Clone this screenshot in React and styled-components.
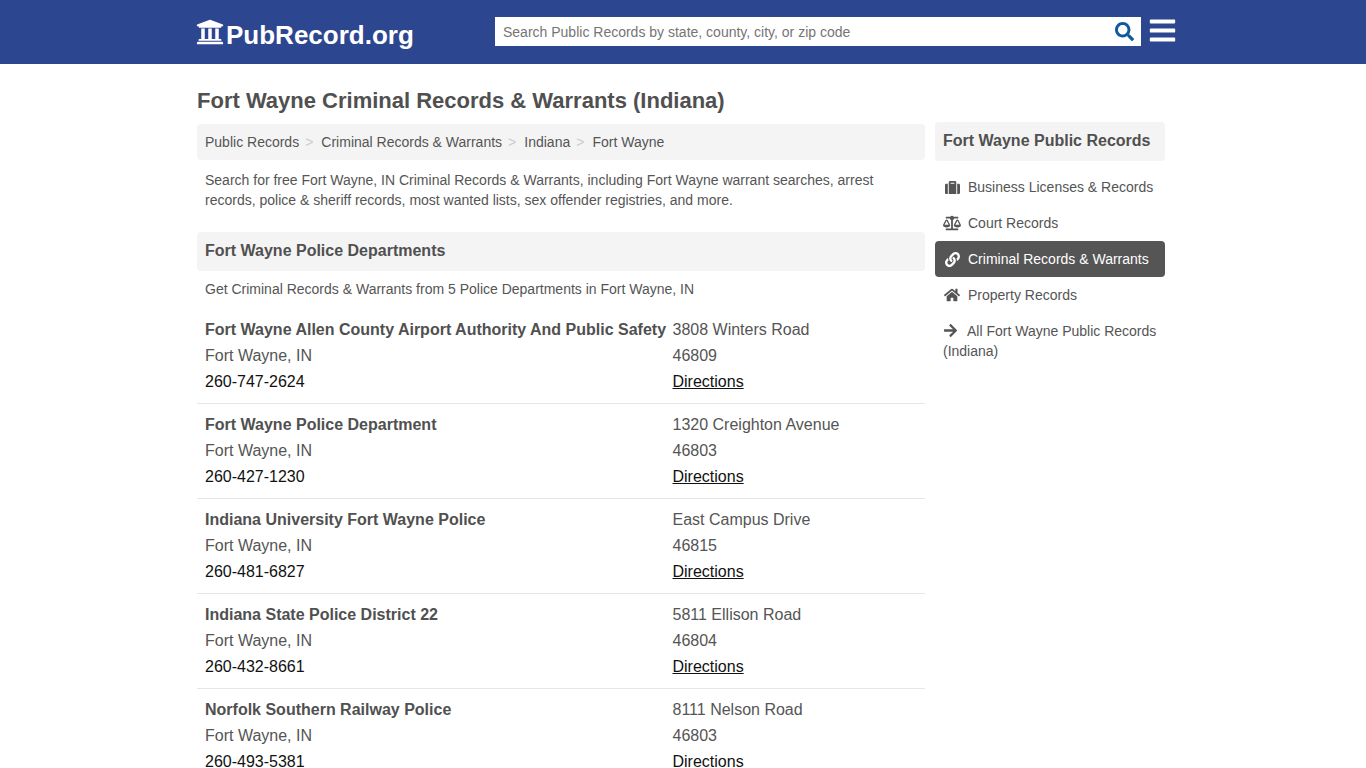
import React from "react";
import styled, { createGlobalStyle } from "styled-components";
import {
  FaUniversity,
  FaSearch,
  FaBars,
  FaSuitcase,
  FaBalanceScale,
  FaLink,
  FaHome,
  FaArrowRight,
} from "react-icons/fa";

const departments = [
  { name: "Fort Wayne Allen County Airport Authority And Public Safety", phone: "260-747-2624", street: "3808 Winters Road", zip: "46809" },
  { name: "Fort Wayne Police Department", phone: "260-427-1230", street: "1320 Creighton Avenue", zip: "46803" },
  { name: "Indiana University Fort Wayne Police", phone: "260-481-6827", street: "East Campus Drive", zip: "46815" },
  { name: "Indiana State Police District 22", phone: "260-432-8661", street: "5811 Ellison Road", zip: "46804" },
  { name: "Norfolk Southern Railway Police", phone: "260-493-5381", street: "8111 Nelson Road", zip: "46803" },
];

const crumbs = ["Public Records", "Criminal Records & Warrants", "Indiana", "Fort Wayne"];

const links = [
  { label: "Business Licenses & Records", Icon: FaSuitcase, size: 15 },
  { label: "Court Records", Icon: FaBalanceScale, size: 18 },
  { label: "Criminal Records & Warrants", Icon: FaLink, size: 15, active: true },
  { label: "Property Records", Icon: FaHome, size: 16 },
];

const App = () => {
  return (
    <>
      <GlobalStyle />
      <Header>
        <HeaderInner>
          <Logo href="#">
            <FaUniversity size={28} />
            <span>PubRecord.org</span>
          </Logo>
          <SearchBox>
            <SearchInput placeholder="Search Public Records by state, county, city, or zip code" />
            <SearchButton aria-label="Search">
              <FaSearch size={19} />
            </SearchButton>
          </SearchBox>
          <MenuButton aria-label="Menu">
            <FaBars size={29} />
          </MenuButton>
        </HeaderInner>
      </Header>
      <Page>
        <Title>Fort Wayne Criminal Records &amp; Warrants (Indiana)</Title>
        <Columns>
          <Main>
            <Breadcrumb>
              {crumbs.map((crumb, i) => (
                <Crumb key={crumb} $first={i === 0}>
                  {crumb}
                </Crumb>
              ))}
            </Breadcrumb>
            <Intro>
              Search for free Fort Wayne, IN Criminal Records &amp; Warrants, including Fort Wayne warrant searches, arrest
              records, police &amp; sheriff records, most wanted lists, sex offender registries, and more.
            </Intro>
            <SectionHead>Fort Wayne Police Departments</SectionHead>
            <SectionText>Get Criminal Records &amp; Warrants from 5 Police Departments in Fort Wayne, IN</SectionText>
            {departments.map((dep) => (
              <Row key={dep.name}>
                <div>
                  <Name>{dep.name}</Name>
                  <Line>Fort Wayne, IN</Line>
                  <Phone>{dep.phone}</Phone>
                </div>
                <div>
                  <Line>{dep.street}</Line>
                  <Line>{dep.zip}</Line>
                  <Directions href="#">Directions</Directions>
                </div>
              </Row>
            ))}
          </Main>
          <Sidebar>
            <SideHead>Fort Wayne Public Records</SideHead>
            <SideNav>
              {links.map(({ label, Icon, size, active }) => (
                <SideLink key={label} href="#" $active={active}>
                  <SideIcon>
                    <Icon size={size} />
                  </SideIcon>
                  {label}
                </SideLink>
              ))}
              <AllLink href="#">
                <FaArrowRight size={15} />
                All Fort Wayne Public Records (Indiana)
              </AllLink>
            </SideNav>
          </Sidebar>
        </Columns>
      </Page>
    </>
  );
};

export default App;

const GlobalStyle = createGlobalStyle`
  html, body {
    margin: 0;
    height: 768px;
    overflow: hidden;
    background: #fff;
    font-family: "Liberation Sans", Arial, sans-serif;
    color: #555;
  }
  * { box-sizing: border-box; }
`;

const Header = styled.header`
  height: 64px;
  background: #2d4690;
`;

const HeaderInner = styled.div`
  width: 972px;
  margin: 0 auto;
  height: 64px;
  display: flex;
  align-items: flex-start;
`;

const Logo = styled.a`
  display: flex;
  flex-shrink: 0;
  align-items: center;
  gap: 2px;
  width: 299px;
  margin-left: -1px;
  height: 64px;
  padding-top: 6px;
  color: #fff;
  text-decoration: none;
  font-size: 26px;
  font-weight: 700;
  white-space: nowrap;
  svg {
    flex-shrink: 0;
    margin-top: -6px;
  }
`;

const SearchBox = styled.div`
  display: flex;
  flex-shrink: 0;
  align-items: center;
  width: 646px;
  height: 29px;
  margin-top: 17px;
  background: #fff;
`;

const SearchInput = styled.input`
  flex: 1;
  min-width: 0;
  height: 100%;
  padding: 0 8px;
  border: 0;
  outline: 0;
  background: transparent;
  font: 14px "Liberation Sans", Arial, sans-serif;
  &::placeholder {
    color: #757575;
    opacity: 1;
  }
`;

const SearchButton = styled.button`
  display: flex;
  width: 36px;
  padding: 0 0 0 10px;
  border: 0;
  background: transparent;
  color: #0f5a9c;
`;

const MenuButton = styled.button`
  display: flex;
  flex-shrink: 0;
  margin: 16px 0 0 7px;
  padding: 0;
  border: 0;
  background: transparent;
  color: #fff;
`;

const Page = styled.main`
  width: 972px;
  margin: 0 auto;
`;

const Title = styled.h1`
  margin: 0;
  padding-top: 24px;
  height: 60px;
  font-size: 22px;
  line-height: 26px;
  font-weight: 700;
  color: #505050;
`;

const Columns = styled.div`
  display: flex;
  gap: 10px;
  align-items: flex-start;
`;

const Main = styled.div`
  width: 728px;
`;

const Breadcrumb = styled.nav`
  display: flex;
  align-items: center;
  height: 36px;
  padding: 0 8px;
  background: #f4f4f4;
  border-radius: 4px;
  font-size: 14px;
  color: #555;
`;

const Crumb = styled.span`
  &::before {
    content: ${(p) => (p.$first ? "none" : '">"')};
    color: #ccc;
    padding: 0 8px 0 6px;
  }
`;

const Intro = styled.p`
  margin: 0;
  padding: 10px 8px 0;
  height: 72px;
  font-size: 14px;
  line-height: 20px;
`;

const SectionHead = styled.h2`
  margin: 0;
  height: 39px;
  padding: 0 8px 2px;
  display: flex;
  align-items: center;
  background: #f4f4f4;
  border-radius: 4px;
  font-size: 16px;
  font-weight: 700;
  color: #505050;
`;

const SectionText = styled.p`
  margin: 0;
  padding: 8px 8px 0;
  height: 38px;
  font-size: 14px;
  line-height: 20px;
`;

const Row = styled.div`
  display: grid;
  grid-template-columns: 467.5px 1fr;
  height: 95px;
  padding: 8px 8px 0;
  font-size: 16px;
  line-height: 26px;
  border-bottom: 1px solid #e6e6e6;
  &:last-child {
    border-bottom: 0;
  }
`;

const Name = styled.div`
  font-weight: 700;
  color: #505050;
  white-space: nowrap;
`;

const Line = styled.div`
  color: #555;
`;

const Phone = styled.div`
  color: #111;
`;

const Directions = styled.a`
  color: #111;
  text-decoration: underline;
`;

const Sidebar = styled.aside`
  width: 230px;
  margin-top: -2px;
`;

const SideHead = styled.h3`
  margin: 0;
  height: 39px;
  padding: 0 8px 2px;
  display: flex;
  align-items: center;
  background: #f4f4f4;
  border-radius: 4px;
  font-size: 16px;
  font-weight: 700;
  color: #505050;
  white-space: nowrap;
`;

const SideNav = styled.nav`
  display: flex;
  flex-direction: column;
  margin-top: 8px;
`;

const SideLink = styled.a`
  display: flex;
  align-items: center;
  height: 36px;
  padding: 0 8px;
  border-radius: 4px;
  font-size: 14px;
  text-decoration: none;
  white-space: nowrap;
  color: ${(p) => (p.$active ? "#fff" : "#555")};
  background: ${(p) => (p.$active ? "#555" : "transparent")};
`;

const SideIcon = styled.span`
  display: flex;
  justify-content: center;
  width: 18px;
  margin-right: 7px;
  svg {
    flex-shrink: 0;
  }
`;

const AllLink = styled.a`
  display: block;
  padding: 8px 4px 8px 8px;
  font-size: 14px;
  line-height: 20px;
  color: #555;
  text-decoration: none;
  svg {
    margin: 0 9px 0 0;
    vertical-align: -2px;
  }
`;
